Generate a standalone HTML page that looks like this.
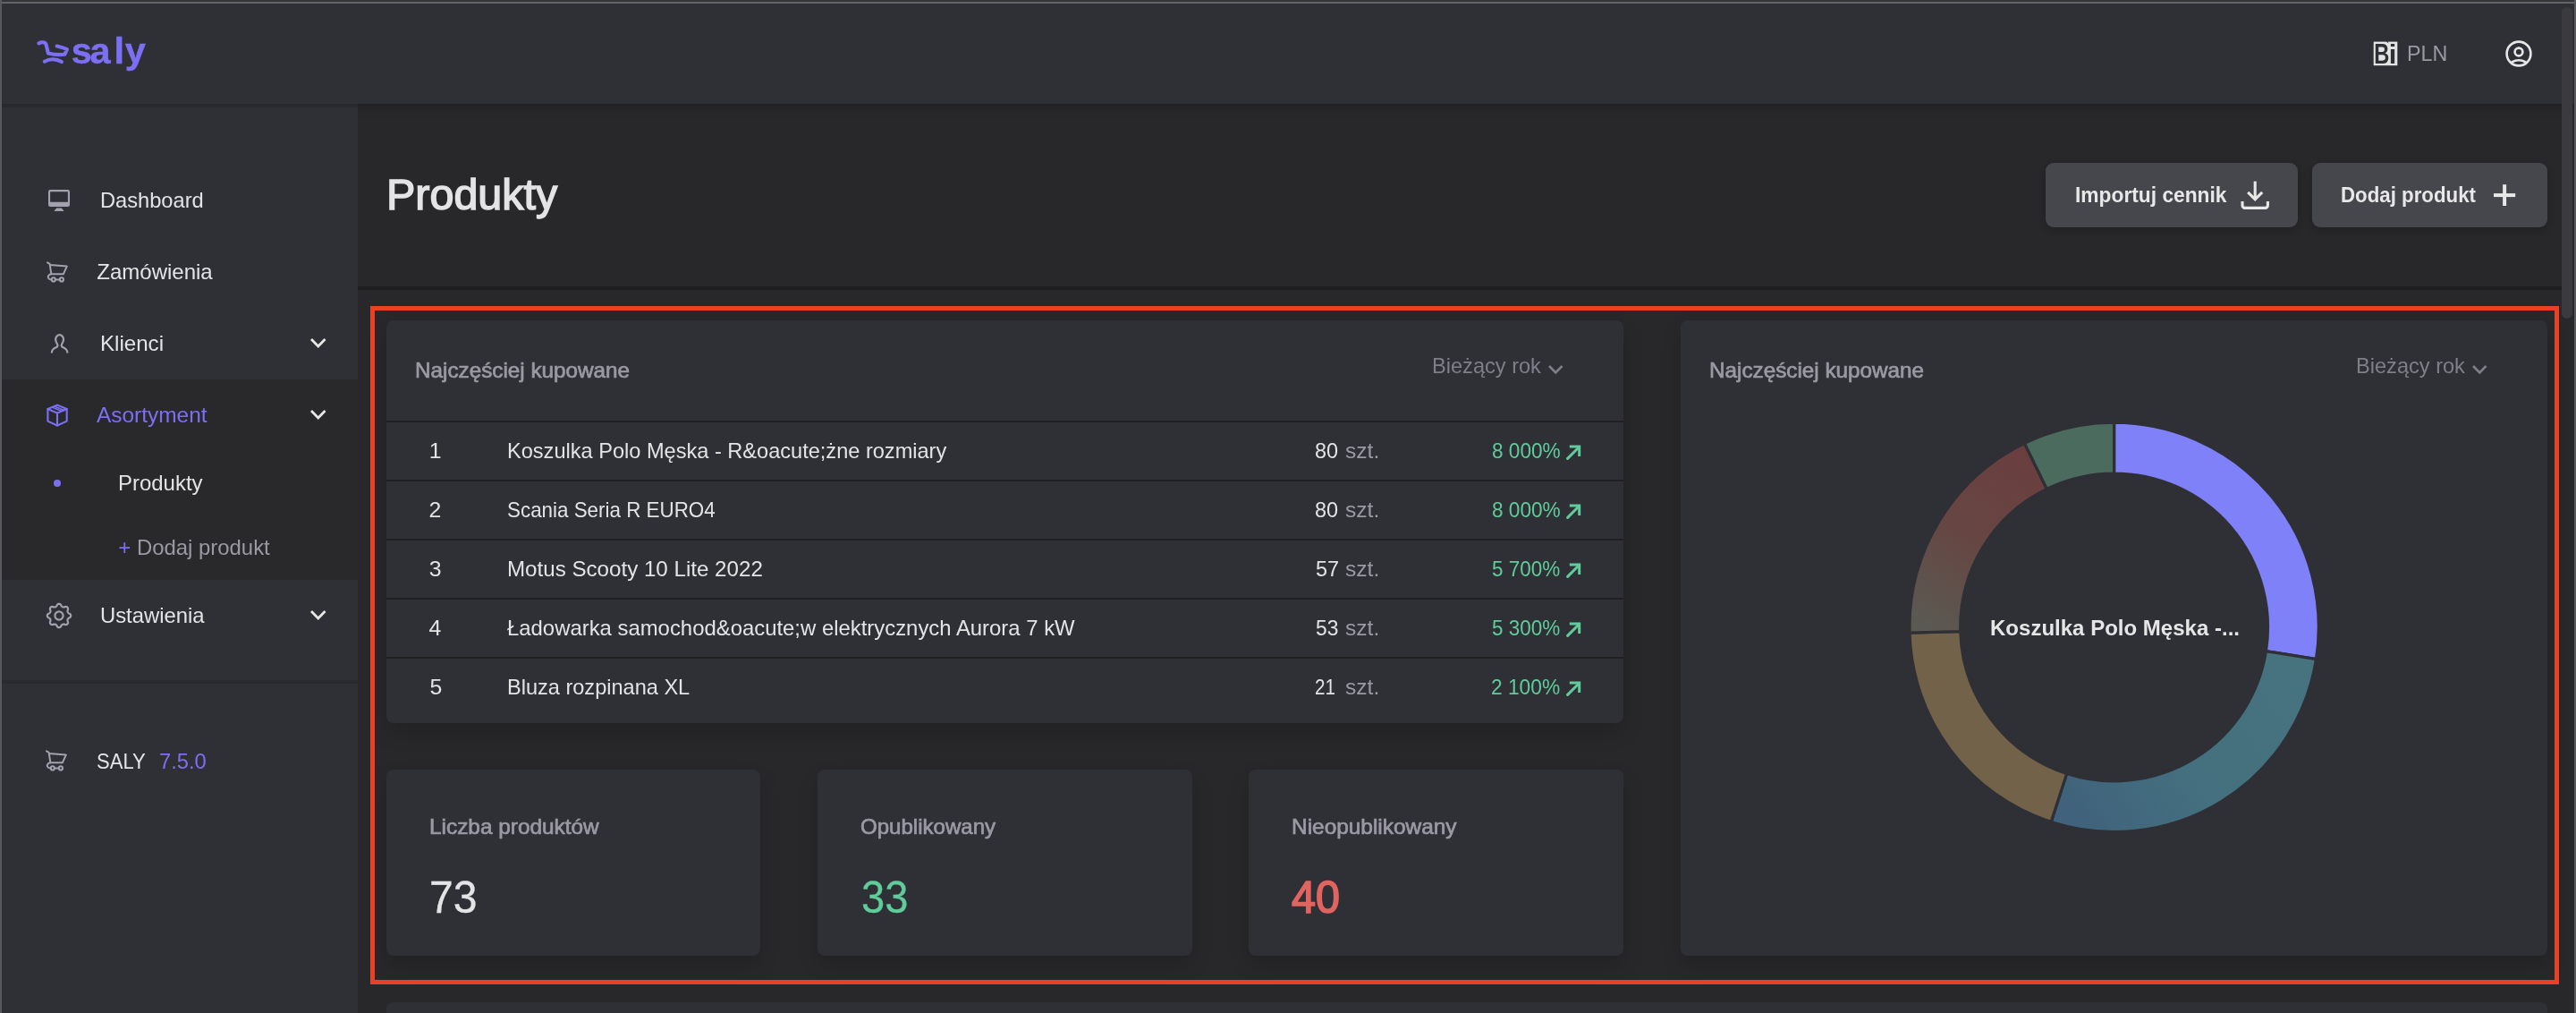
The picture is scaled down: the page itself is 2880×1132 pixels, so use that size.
<!DOCTYPE html>
<html lang="pl"><head><meta charset="utf-8"><title>Produkty - Saly</title>
<style>
html,body{margin:0;padding:0;background:#28282b;}
body{width:2880px;height:1132px;overflow:hidden;position:relative;font-family:"Liberation Sans",sans-serif;}
#app{position:absolute;left:0;top:0;width:2880px;height:1132px;overflow:hidden;}
.t{position:absolute;white-space:pre;line-height:1;transform-origin:0 0;font-family:"Liberation Sans",sans-serif;}
</style></head><body>
<div id="app">
<div style="position:absolute;left:0px;top:0px;width:2880px;height:1132px;background:#28282b;"></div><div style="position:absolute;left:0px;top:0px;width:2880px;height:116px;background:#2f3035;box-shadow:0 4px 10px rgba(0,0,0,.18);z-index:2;"></div><div style="position:absolute;left:0px;top:116px;width:400px;height:4px;background:#29292c;z-index:4;"></div><div style="position:absolute;left:0px;top:120px;width:400px;height:1012px;background:#2f3035;z-index:3;"></div><div style="position:absolute;left:0px;top:424px;width:400px;height:224px;background:#29292c;z-index:3;"></div><div style="position:absolute;left:0px;top:760px;width:400px;height:4px;background:#2a2a2e;z-index:3;"></div><div style="position:absolute;left:0;top:0;width:2880px;height:1132px;z-index:6;will-change:transform;"><svg style="position:absolute;left:36px;top:36px" width="140" height="56" viewBox="36 36 140 56">
<g fill="none" stroke="#7c6ff3" stroke-width="4.1" stroke-linecap="round" stroke-linejoin="round">
<path d="M43.4 48.4 C45.6 47.2 49.8 46.4 51.2 49 C52.2 51.5 52.8 55.4 53.9 59.5 C59 60.9 66 61.5 72.3 60.8 L75 55.2 C71.4 53.6 67.5 52.4 63.6 51.5"/>
<path d="M49.8 68.8 C55.5 65.5 63 65.5 68.9 69.1"/>
</g>
<text x="79.8 100.6 127.4 139.8" y="71.2" font-family="Liberation Sans, sans-serif" font-weight="700" font-size="41.5" fill="#7c6ff3" stroke="#7c6ff3" stroke-width="0.5">saly</text>
</svg><svg style="position:absolute;left:2650px;top:42px" width="36" height="36" viewBox="2650 42 36 36">
<rect x="2653.7" y="46.6" width="26.6" height="26.6" fill="#e4e4e4"/>
<path d="M2667.6 46 L2669.6 46 L2670.4 48.4 Z" fill="#2f3035"/>
<text transform="translate(2654.35,70.8) scale(0.755,1)" font-family="Liberation Sans, sans-serif" font-weight="700" font-size="31.4" fill="#2f3035">B</text>
<text transform="translate(2670.85,70.8) scale(1.03,1)" font-family="Liberation Sans, sans-serif" font-weight="700" font-size="30" fill="#2f3035">i</text>
</svg><span class="t" style="left:2690.65px;top:48.00px;font-size:24px;color:#9b99a4;transform:scaleX(0.9720);">PLN</span><svg style="position:absolute;left:2798px;top:42px" width="36" height="36" viewBox="2798 42 36 36">
<defs><clipPath id="uc"><circle cx="2816" cy="60" r="13.4"/></clipPath></defs>
<g fill="none" stroke="#e6e6e6" stroke-width="2.6">
<circle cx="2816" cy="60" r="13.4"/>
<circle cx="2816" cy="58" r="4.4"/>
<ellipse cx="2816" cy="73.7" rx="10" ry="6.5" clip-path="url(#uc)"/>
</g></svg><svg style="position:absolute;left:50px;top:208px" width="32" height="32" viewBox="50 208 32 32">
<path fill="#a3a1ad" fill-rule="evenodd" d="M56.2 212 h19.6 a2.2 2.2 0 0 1 2.2 2.2 v14.6 a2.2 2.2 0 0 1 -2.2 2.2 h-19.6 a2.2 2.2 0 0 1 -2.2 -2.2 v-14.6 a2.2 2.2 0 0 1 2.2 -2.2 z M56.1 214.2 v11.6 h19.8 v-11.6 z"/>
<path fill="#a3a1ad" d="M63.2 232.5 h5.7 l2.6 3.5 h-11.1 z"/>
</svg><span class="t" style="left:112.03px;top:212.00px;font-size:24px;color:#e4e4e6;transform:scaleX(0.9851);">Dashboard</span><svg style="position:absolute;left:51.5px;top:291.5px" width="28" height="28" viewBox="0 0 28 28">
<g fill="none" stroke="#a3a1ad" stroke-width="2" stroke-linecap="round" stroke-linejoin="round">
<path d="M1 1.4 L3.6 2.9 L5.4 14.3 L18.8 14.3 L22.8 5.6 L3.9 3.9"/>
<path d="M5.4 14.3 C2 14.5 0.6 17.8 3 19.8 C4 20.5 5 20.5 5.8 20.4"/>
<circle cx="7.8" cy="20.4" r="2.1"/><circle cx="16.9" cy="20.4" r="2.1"/>
<path d="M9.9 20.4 L14.8 20.4"/>
</g></svg><span class="t" style="left:108.30px;top:292.00px;font-size:24px;color:#e4e4e6;">Zamówienia</span><svg style="position:absolute;left:50px;top:368px" width="32" height="32" viewBox="50 368 32 32">
<g fill="none" stroke="#a3a1ad" stroke-width="2.2" stroke-linecap="butt" stroke-linejoin="round">
<path d="M57.8 394.6 C57.8 390.5 60 389.3 62.6 388.3 C64.6 387.5 64.8 386 64 384.4 C62.2 381.5 61.6 378.5 63 376.3 C64 374.7 65.3 374.2 66.6 374.2 C67.9 374.2 69.2 374.7 70.2 376.3 C71.6 378.5 71 381.5 69.2 384.4 C68.4 386 68.6 387.5 70.6 388.3 C73.2 389.3 75.4 390.5 75.4 394.6"/>
</g></svg><span class="t" style="left:111.99px;top:372.00px;font-size:24px;color:#e4e4e6;transform:scaleX(1.0045);">Klienci</span><svg style="position:absolute;left:344.45px;top:375.2px" width="23.5" height="16" viewBox="0 0 23.5 16"><path d="M4 4 L11.75 12 L19.5 4" fill="none" stroke="#e6e6e6" stroke-width="2.8" stroke-linecap="butt" stroke-linejoin="miter"/></svg><svg style="position:absolute;left:48px;top:447px" width="32" height="32" viewBox="48 447 32 32">
<g fill="none" stroke="#7c6ff3" stroke-width="2.1" stroke-linejoin="round" stroke-linecap="round">
<path d="M64.1 452.6 L74.7 457 L74.7 470.6 L64 475.5 L53.4 470.6 L53.4 457 Z"/>
<path d="M53.4 457 L64 461.6 L74.7 457"/>
<path d="M64 461.6 L64 475.5"/>
<path d="M58.2 455 L68.9 459.5" stroke-width="1.6"/>
<path d="M60.9 453.9 L71.6 458.4" stroke-width="1.6"/>
</g></svg><span class="t" style="left:108.40px;top:452.00px;font-size:24px;color:#7c6ff3;transform:scaleX(1.0182);">Asortyment</span><svg style="position:absolute;left:344.45px;top:455.2px" width="23.5" height="16" viewBox="0 0 23.5 16"><path d="M4 4 L11.75 12 L19.5 4" fill="none" stroke="#e6e6e6" stroke-width="2.8" stroke-linecap="butt" stroke-linejoin="miter"/></svg><div style="position:absolute;left:60px;top:536px;width:8px;height:8px;border-radius:50%;background:#7c6ff3"></div><span class="t" style="left:131.80px;top:528.00px;font-size:24px;color:#e4e4e6;transform:scaleX(0.9978);">Produkty</span><span class="t" style="left:132.20px;top:600.00px;font-size:24px;color:#7c6ff3;">+</span><span class="t" style="left:153.11px;top:600.00px;font-size:24px;color:#9b99a4;transform:scaleX(0.9953);">Dodaj produkt</span><svg style="position:absolute;left:50.05px;top:672.1px" width="32" height="32" viewBox="-16 -16 32 32">
<g fill="none" stroke="#a3a1ad" stroke-width="2.2" stroke-linejoin="round">
<path d="M0.00 -13.20 L0.52 -13.14 L1.02 -12.97 L1.50 -12.69 L1.95 -12.29 L2.31 -11.62 L2.63 -10.95 L2.96 -10.51 L3.30 -10.16 L3.65 -9.89 L4.02 -9.70 L4.42 -9.58 L4.85 -9.52 L5.34 -9.53 L5.88 -9.60 L6.58 -9.85 L7.31 -10.07 L7.91 -10.04 L8.45 -9.90 L8.93 -9.66 L9.33 -9.33 L9.66 -8.93 L9.90 -8.45 L10.04 -7.91 L10.07 -7.31 L9.85 -6.58 L9.60 -5.88 L9.53 -5.34 L9.52 -4.85 L9.58 -4.42 L9.70 -4.02 L9.89 -3.65 L10.16 -3.30 L10.51 -2.96 L10.95 -2.63 L11.62 -2.31 L12.29 -1.95 L12.69 -1.50 L12.97 -1.02 L13.14 -0.52 L13.20 -0.00 L13.14 0.52 L12.97 1.02 L12.69 1.50 L12.29 1.95 L11.62 2.31 L10.95 2.63 L10.51 2.96 L10.16 3.30 L9.89 3.65 L9.70 4.02 L9.58 4.42 L9.52 4.85 L9.53 5.34 L9.60 5.88 L9.85 6.58 L10.07 7.31 L10.04 7.91 L9.90 8.45 L9.66 8.93 L9.33 9.33 L8.93 9.66 L8.45 9.90 L7.91 10.04 L7.31 10.07 L6.58 9.85 L5.88 9.60 L5.34 9.53 L4.85 9.52 L4.42 9.58 L4.02 9.70 L3.65 9.89 L3.30 10.16 L2.96 10.51 L2.63 10.95 L2.31 11.62 L1.95 12.29 L1.50 12.69 L1.02 12.97 L0.52 13.14 L0.00 13.20 L-0.52 13.14 L-1.02 12.97 L-1.50 12.69 L-1.95 12.29 L-2.31 11.62 L-2.63 10.95 L-2.96 10.51 L-3.30 10.16 L-3.65 9.89 L-4.02 9.70 L-4.42 9.58 L-4.85 9.52 L-5.34 9.53 L-5.88 9.60 L-6.58 9.85 L-7.31 10.07 L-7.91 10.04 L-8.45 9.90 L-8.93 9.66 L-9.33 9.33 L-9.66 8.93 L-9.90 8.45 L-10.04 7.91 L-10.07 7.31 L-9.85 6.58 L-9.60 5.88 L-9.53 5.34 L-9.52 4.85 L-9.58 4.42 L-9.70 4.02 L-9.89 3.65 L-10.16 3.30 L-10.51 2.96 L-10.95 2.63 L-11.62 2.31 L-12.29 1.95 L-12.69 1.50 L-12.97 1.02 L-13.14 0.52 L-13.20 0.00 L-13.14 -0.52 L-12.97 -1.02 L-12.69 -1.50 L-12.29 -1.95 L-11.62 -2.31 L-10.95 -2.63 L-10.51 -2.96 L-10.16 -3.30 L-9.89 -3.65 L-9.70 -4.02 L-9.58 -4.42 L-9.52 -4.85 L-9.53 -5.34 L-9.60 -5.88 L-9.85 -6.58 L-10.07 -7.31 L-10.04 -7.91 L-9.90 -8.45 L-9.66 -8.93 L-9.33 -9.33 L-8.93 -9.66 L-8.45 -9.90 L-7.91 -10.04 L-7.31 -10.07 L-6.58 -9.85 L-5.88 -9.60 L-5.34 -9.53 L-4.85 -9.52 L-4.42 -9.58 L-4.02 -9.70 L-3.65 -9.89 L-3.30 -10.16 L-2.96 -10.51 L-2.63 -10.95 L-2.31 -11.62 L-1.95 -12.29 L-1.50 -12.69 L-1.02 -12.97 L-0.52 -13.14 Z"/>
<circle cx="0" cy="0" r="4.6"/>
</g></svg><span class="t" style="left:111.91px;top:676.00px;font-size:24px;color:#e4e4e6;transform:scaleX(0.9922);">Ustawienia</span><svg style="position:absolute;left:344.45px;top:679px" width="23.5" height="16" viewBox="0 0 23.5 16"><path d="M4 4 L11.75 12 L19.5 4" fill="none" stroke="#e6e6e6" stroke-width="2.8" stroke-linecap="butt" stroke-linejoin="miter"/></svg><svg style="position:absolute;left:50.6px;top:838px" width="28" height="28" viewBox="0 0 28 28">
<g fill="none" stroke="#a3a1ad" stroke-width="2" stroke-linecap="round" stroke-linejoin="round">
<path d="M1 1.4 L3.6 2.9 L5.4 14.3 L18.8 14.3 L22.8 5.6 L3.9 3.9"/>
<path d="M5.4 14.3 C2 14.5 0.6 17.8 3 19.8 C4 20.5 5 20.5 5.8 20.4"/>
<circle cx="7.8" cy="20.4" r="2.1"/><circle cx="16.9" cy="20.4" r="2.1"/>
<path d="M9.9 20.4 L14.8 20.4"/>
</g></svg><span class="t" style="left:107.88px;top:839.00px;font-size:24px;color:#e4e4e6;transform:scaleX(0.9191);">SALY</span><span class="t" style="left:178.35px;top:839.00px;font-size:24.8px;color:#7c6ff3;transform:scaleX(0.9567);">7.5.0</span><span class="t" style="left:431.76px;top:194.00px;font-size:48px;color:#e4e4e6;-webkit-text-stroke:1.45px #e4e4e6;transform:scaleX(1.0095);">Produkty</span><div style="position:absolute;left:2287px;top:182px;width:282px;height:72px;background:#46464d;border-radius:9px;box-shadow:0 3px 8px rgba(0,0,0,.2);"></div><div style="position:absolute;left:2585px;top:182px;width:263px;height:72px;background:#46464d;border-radius:9px;box-shadow:0 3px 8px rgba(0,0,0,.2);"></div><span class="t" style="left:2319.78px;top:206.00px;font-size:24px;color:#e8e8e8;font-weight:700;transform:scaleX(0.9486);">Importuj cennik</span><span class="t" style="left:2617.02px;top:206.00px;font-size:24px;color:#e8e8e8;font-weight:700;transform:scaleX(0.9279);">Dodaj produkt</span><svg style="position:absolute;left:2500px;top:198px" width="42" height="40" viewBox="2500 198 42 40">
<g fill="none" stroke="#e8e8e8" stroke-width="3.1" stroke-linejoin="miter">
<path d="M2521.2 202.6 L2521.2 222.4"/>
<path d="M2513.2 214.8 L2521.2 222.8 L2529.2 214.8"/>
<path d="M2507 225 V229.6 a2.8 2.8 0 0 0 2.8 2.8 H2532.6 a2.8 2.8 0 0 0 2.8 -2.8 V225"/>
</g></svg><svg style="position:absolute;left:2784px;top:202px" width="32" height="32" viewBox="2784 202 32 32">
<g fill="none" stroke="#e8e8e8" stroke-width="4">
<path d="M2800.1 206.2 L2800.1 230"/><path d="M2788 218.1 L2812.2 218.1"/>
</g></svg><div style="position:absolute;left:400px;top:320px;width:2464px;height:4px;background:#1e1e20;"></div><div style="position:absolute;left:414px;top:342px;width:2437px;height:748px;border:5px solid #ea4126;z-index:3"></div><div style="position:absolute;left:432px;top:358px;width:1383px;height:450px;background:#2f3035;border-radius:8px;box-shadow:0 11px 24px -2px rgba(0,0,0,.17);"></div><span class="t" style="left:463.58px;top:402.00px;font-size:24px;color:#9b99a4;-webkit-text-stroke:0.7px #9b99a4;transform:scaleX(1.0111);">Najczęściej kupowane</span><span class="t" style="left:1600.93px;top:397.00px;font-size:24px;color:#7f7f8a;transform:scaleX(0.9828);">Bieżący rok</span><svg style="position:absolute;left:1728.15px;top:404.65px" width="22.5" height="15.5" viewBox="0 0 22.5 15.5"><path d="M4 4 L11.25 11.5 L18.5 4" fill="none" stroke="#7f7f8a" stroke-width="2.6" stroke-linecap="butt" stroke-linejoin="miter"/></svg><div style="position:absolute;left:432px;top:470px;width:1383px;height:2px;background:#202023;"></div><span class="t" style="left:479.70px;top:492.00px;font-size:24.8px;color:#e4e4e6;">1</span><span class="t" style="left:566.93px;top:492.00px;font-size:24px;color:#e4e4e6;transform:scaleX(0.9821);">Koszulka Polo Męska - R&amp;oacute;żne rozmiary</span><span class="t" style="left:1470.48px;top:492.00px;font-size:24.8px;color:#e4e4e6;transform:scaleX(0.9455);">80</span><span class="t" style="left:1503.89px;top:492.00px;font-size:24px;color:#9b99a4;transform:scaleX(1.0231);">szt.</span><span class="t" style="left:1667.80px;top:492.00px;font-size:24.8px;color:#60cc9b;transform:scaleX(0.9125);">8 000%</span><svg style="position:absolute;left:1748px;top:493px" width="24" height="24" viewBox="0 0 24 24"><g fill="none" stroke="#60cc9b" stroke-width="3" stroke-linejoin="miter"><path d="M4.6 19.4 L17 7" stroke-linecap="round"/><path d="M6.8 5.9 L17.7 5.9 L17.7 17.1"/></g></svg><div style="position:absolute;left:432px;top:536px;width:1383px;height:2px;background:#202023;"></div><span class="t" style="left:479.40px;top:558.00px;font-size:24.8px;color:#e4e4e6;">2</span><span class="t" style="left:566.77px;top:558.00px;font-size:24px;color:#e4e4e6;transform:scaleX(0.9330);">Scania Seria R EURO4</span><span class="t" style="left:1470.48px;top:558.00px;font-size:24.8px;color:#e4e4e6;transform:scaleX(0.9455);">80</span><span class="t" style="left:1503.89px;top:558.00px;font-size:24px;color:#9b99a4;transform:scaleX(1.0231);">szt.</span><span class="t" style="left:1667.80px;top:558.00px;font-size:24.8px;color:#60cc9b;transform:scaleX(0.9125);">8 000%</span><svg style="position:absolute;left:1748px;top:559px" width="24" height="24" viewBox="0 0 24 24"><g fill="none" stroke="#60cc9b" stroke-width="3" stroke-linejoin="miter"><path d="M4.6 19.4 L17 7" stroke-linecap="round"/><path d="M6.8 5.9 L17.7 5.9 L17.7 17.1"/></g></svg><div style="position:absolute;left:432px;top:602px;width:1383px;height:2px;background:#202023;"></div><span class="t" style="left:479.70px;top:624.00px;font-size:24.8px;color:#e4e4e6;">3</span><span class="t" style="left:566.89px;top:624.00px;font-size:24px;color:#e4e4e6;transform:scaleX(1.0057);">Motus Scooty 10 Lite 2022</span><span class="t" style="left:1471.07px;top:624.00px;font-size:24.8px;color:#e4e4e6;transform:scaleX(0.9451);">57</span><span class="t" style="left:1503.89px;top:624.00px;font-size:24px;color:#9b99a4;transform:scaleX(1.0231);">szt.</span><span class="t" style="left:1668.40px;top:624.00px;font-size:24.8px;color:#60cc9b;transform:scaleX(0.9053);">5 700%</span><svg style="position:absolute;left:1748px;top:625px" width="24" height="24" viewBox="0 0 24 24"><g fill="none" stroke="#60cc9b" stroke-width="3" stroke-linejoin="miter"><path d="M4.6 19.4 L17 7" stroke-linecap="round"/><path d="M6.8 5.9 L17.7 5.9 L17.7 17.1"/></g></svg><div style="position:absolute;left:432px;top:668px;width:1383px;height:2px;background:#202023;"></div><span class="t" style="left:479.60px;top:690.00px;font-size:24.8px;color:#e4e4e6;">4</span><span class="t" style="left:567.00px;top:690.00px;font-size:24px;color:#e4e4e6;transform:scaleX(0.9953);">Ładowarka samochod&amp;oacute;w elektrycznych Aurora 7 kW</span><span class="t" style="left:1471.10px;top:690.00px;font-size:24.8px;color:#e4e4e6;transform:scaleX(0.9183);">53</span><span class="t" style="left:1503.89px;top:690.00px;font-size:24px;color:#9b99a4;transform:scaleX(1.0231);">szt.</span><span class="t" style="left:1668.40px;top:690.00px;font-size:24.8px;color:#60cc9b;transform:scaleX(0.9053);">5 300%</span><svg style="position:absolute;left:1748px;top:691px" width="24" height="24" viewBox="0 0 24 24"><g fill="none" stroke="#60cc9b" stroke-width="3" stroke-linejoin="miter"><path d="M4.6 19.4 L17 7" stroke-linecap="round"/><path d="M6.8 5.9 L17.7 5.9 L17.7 17.1"/></g></svg><div style="position:absolute;left:432px;top:734px;width:1383px;height:2px;background:#202023;"></div><span class="t" style="left:480.40px;top:756.00px;font-size:24.8px;color:#e4e4e6;">5</span><span class="t" style="left:566.94px;top:756.00px;font-size:24px;color:#e4e4e6;transform:scaleX(0.9810);">Bluza rozpinana XL</span><span class="t" style="left:1470.22px;top:756.00px;font-size:24.8px;color:#e4e4e6;transform:scaleX(0.8333);">21</span><span class="t" style="left:1503.89px;top:756.00px;font-size:24px;color:#9b99a4;transform:scaleX(1.0231);">szt.</span><span class="t" style="left:1667.41px;top:756.00px;font-size:24.8px;color:#60cc9b;transform:scaleX(0.9172);">2 100%</span><svg style="position:absolute;left:1748px;top:757px" width="24" height="24" viewBox="0 0 24 24"><g fill="none" stroke="#60cc9b" stroke-width="3" stroke-linejoin="miter"><path d="M4.6 19.4 L17 7" stroke-linecap="round"/><path d="M6.8 5.9 L17.7 5.9 L17.7 17.1"/></g></svg><div style="position:absolute;left:432px;top:860px;width:418px;height:208px;background:#2f3035;border-radius:8px;box-shadow:0 11px 24px -2px rgba(0,0,0,.17);"></div><span class="t" style="left:479.77px;top:912.00px;font-size:24px;color:#9b99a4;-webkit-text-stroke:0.7px #9b99a4;transform:scaleX(1.0157);">Liczba produktów</span><span class="t" style="left:479.67px;top:979.00px;font-size:49.6px;color:#e4e4e6;-webkit-text-stroke:0.3px #e4e4e6;transform:scaleX(0.9704);">73</span><div style="position:absolute;left:914px;top:860px;width:419px;height:208px;background:#2f3035;border-radius:8px;box-shadow:0 11px 24px -2px rgba(0,0,0,.17);"></div><span class="t" style="left:962.10px;top:912.00px;font-size:24px;color:#9b99a4;-webkit-text-stroke:0.7px #9b99a4;transform:scaleX(1.0020);">Opublikowany</span><span class="t" style="left:962.79px;top:979.00px;font-size:49.6px;color:#60cc9b;-webkit-text-stroke:0.3px #60cc9b;transform:scaleX(0.9493);">33</span><div style="position:absolute;left:1396px;top:860px;width:419px;height:208px;background:#2f3035;border-radius:8px;box-shadow:0 11px 24px -2px rgba(0,0,0,.17);"></div><span class="t" style="left:1443.77px;top:912.00px;font-size:24px;color:#9b99a4;-webkit-text-stroke:0.7px #9b99a4;transform:scaleX(1.0173);">Nieopublikowany</span><span class="t" style="left:1444.43px;top:979.00px;font-size:49.6px;color:#e0645f;-webkit-text-stroke:1.7px #e0645f;transform:scaleX(0.9751);">40</span><div style="position:absolute;left:1879px;top:358px;width:969px;height:710px;background:#2f3035;border-radius:8px;box-shadow:0 11px 24px -2px rgba(0,0,0,.17);"></div><span class="t" style="left:1910.58px;top:402.00px;font-size:24px;color:#9b99a4;-webkit-text-stroke:0.7px #9b99a4;transform:scaleX(1.0111);">Najczęściej kupowane</span><span class="t" style="left:2633.93px;top:397.00px;font-size:24px;color:#7f7f8a;transform:scaleX(0.9828);">Bieżący rok</span><svg style="position:absolute;left:2761.15px;top:404.65px" width="22.5" height="15.5" viewBox="0 0 22.5 15.5"><path d="M4 4 L11.25 11.5 L18.5 4" fill="none" stroke="#7f7f8a" stroke-width="2.6" stroke-linecap="butt" stroke-linejoin="miter"/></svg><svg style="position:absolute;left:2120px;top:456px" width="488" height="488" viewBox="2120 456 488 488">
<defs>
<linearGradient id="g2" gradientUnits="userSpaceOnUse" x1="2580" y1="760" x2="2330" y2="930"><stop offset="0" stop-color="#46737e"/><stop offset="0.55" stop-color="#44707f"/><stop offset="1" stop-color="#40627c"/></linearGradient>
<linearGradient id="g4" gradientUnits="userSpaceOnUse" x1="2150" y1="700" x2="2290" y2="500"><stop offset="0" stop-color="#5a5a52"/><stop offset="0.45" stop-color="#664643"/><stop offset="1" stop-color="#6b3d3e"/></linearGradient>
</defs>
<path d="M2363.60 472.20 A228.7 228.7 0 0 1 2589.50 736.55 L2533.40 727.70 A171.9 171.9 0 0 0 2363.60 529.00 Z" fill="#7f81f8" stroke="#2f3035" stroke-width="3.2" stroke-linejoin="miter"/><path d="M2589.50 736.55 A228.7 228.7 0 0 1 2293.16 918.48 L2310.66 864.44 A171.9 171.9 0 0 0 2533.40 727.70 Z" fill="url(#g2)" stroke="#2f3035" stroke-width="3.2" stroke-linejoin="miter"/><path d="M2293.16 918.48 A228.7 228.7 0 0 1 2134.98 707.07 L2191.76 705.54 A171.9 171.9 0 0 0 2310.66 864.44 Z" fill="#73624a" stroke="#2f3035" stroke-width="3.2" stroke-linejoin="miter"/><path d="M2134.98 707.07 A228.7 228.7 0 0 1 2263.42 495.31 L2288.30 546.37 A171.9 171.9 0 0 0 2191.76 705.54 Z" fill="url(#g4)" stroke="#2f3035" stroke-width="3.2" stroke-linejoin="miter"/><path d="M2263.42 495.31 A228.7 228.7 0 0 1 2363.60 472.20 L2363.60 529.00 A171.9 171.9 0 0 0 2288.30 546.37 Z" fill="#4a6b5e" stroke="#2f3035" stroke-width="3.2" stroke-linejoin="miter"/>
</svg><span class="t" style="left:2225.15px;top:690.00px;font-size:24.8px;color:#e6e6e6;font-weight:700;transform:scaleX(0.9687);">Koszulka Polo Męska -...</span><div style="position:absolute;left:432px;top:1120px;width:2416px;height:40px;background:#2f3035;border-radius:8px;"></div><div style="position:absolute;left:2864px;top:8px;width:12px;height:348px;background:#3a3a3f;border-radius:6px;z-index:9;"></div></div><div style="position:absolute;left:0px;top:0px;width:2880px;height:2px;background:#343539;z-index:20;"></div><div style="position:absolute;left:0px;top:2px;width:2880px;height:2px;background:#636468;z-index:20;"></div><div style="position:absolute;left:0px;top:0px;width:2px;height:1132px;background:#58595d;z-index:20;"></div><div style="position:absolute;left:2878px;top:0px;width:2px;height:1132px;background:#58595b;z-index:20;"></div>
</div>
<script>(function(){var w=document.documentElement.clientWidth||window.innerWidth;if(w&&Math.abs(w-2880)>1){var k=w/2880,a=document.getElementById('app');a.style.transformOrigin='0 0';a.style.transform='scale('+k+')';document.body.style.width=w+'px';document.body.style.height=(1132*k)+'px';}})();</script>
</body></html>
